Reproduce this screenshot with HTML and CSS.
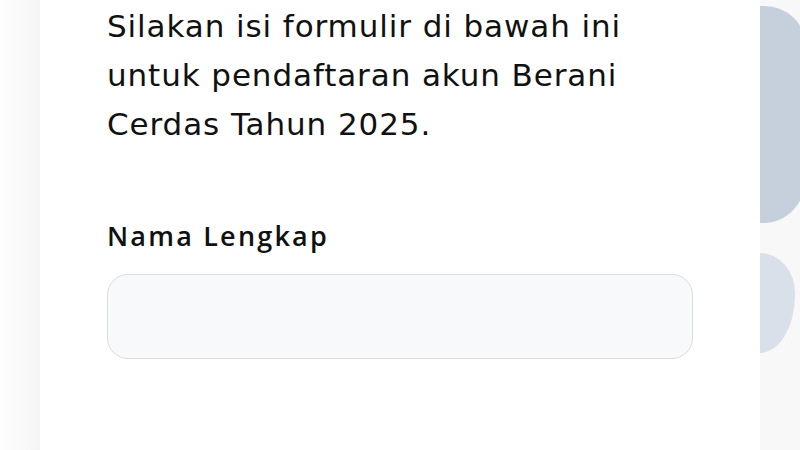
FILE: index.html
```html
<!DOCTYPE html>
<html lang="id">
<head>
<meta charset="utf-8">
<title>Pendaftaran Akun Berani Cerdas 2025</title>
<link rel="stylesheet" href="styles.css">
</head>
<body>
<div class="page">
  <div class="gutter"></div>
  <main class="card">
    <p class="intro">Silakan isi formulir di bawah ini untuk pendaftaran akun Berani Cerdas Tahun 2025.</p>
    <label class="label" for="nama">Nama Lengkap</label>
    <input class="field" id="nama" type="text">
  </main>
  <aside class="peek">
    <div class="blob blob-a"></div>
    <div class="blob blob-b"></div>
  </aside>
</div>
</body>
</html>
```
FILE: styles.css
```css
* { box-sizing: border-box; }
html, body { margin: 0; height: 100%; }
body {
  background: #f8f8f9;
  font-family: "Open Sans", "Noto Sans", sans-serif;
  color: #111;
  overflow: hidden;
}
.page {
  display: flex;
  height: 450px;
  width: 800px;
}
.gutter {
  width: 40px;
  flex: none;
  background: linear-gradient(to right, #fdfdfd 0%, #fafafa 50%, #f4f4f5 100%);
}
.card {
  width: 720px;
  flex: none;
  background: #ffffff;
  padding: 0 67px;
  display: flex;
  flex-direction: column;
}
.intro {
  margin: 2px 0 0;
  font-family: "DejaVu Sans", "Open Sans", sans-serif;
  font-size: 31px;
  line-height: 49px;
  font-weight: 400;
  letter-spacing: 0.9px;
  width: 540px;
}
.label {
  margin-top: 70px;
  font-size: 27px;
  line-height: 34px;
  font-weight: 600;
  letter-spacing: 2.2px;
}
.field {
  margin-top: 21px;
  width: 586px;
  height: 85px;
  border: 1.5px solid #d9dce1;
  border-radius: 21px;
  background: #f8f9fb;
  outline: none;
}
.peek {
  flex: 1;
  display: flex;
  flex-direction: column;
  padding-top: 6px;
  gap: 30px;
  overflow: hidden;
}
.blob-a {
  width: 46px;
  height: 217px;
  background: #c6d0dd;
  border-radius: 0 42px 42px 0 / 0 40px 46px 0;
}
.blob-b {
  width: 35px;
  height: 100px;
  background: #d9e0e9;
  border-radius: 0 35px 35px 0 / 0 40px 58px 0;
}
```
